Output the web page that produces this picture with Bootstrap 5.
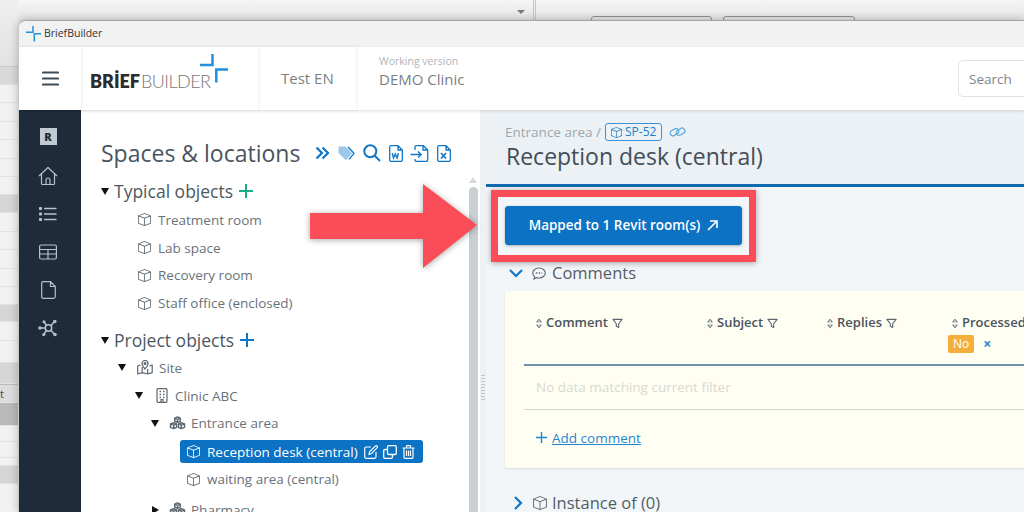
<!DOCTYPE html>
<html lang="en">
<head>
<meta charset="utf-8">
<title>BriefBuilder</title>
<link href="https://cdn.jsdelivr.net/npm/bootstrap@5.3.0/dist/css/bootstrap.min.css" rel="stylesheet">
<style>
html,body{margin:0;height:512px;overflow:hidden;}
body{font-family:"Open Sans","Noto Sans",sans-serif;color:#4d5761;background:#f1f1f1;}
.bb-stage{position:relative;width:1024px;height:512px;overflow:hidden;background:linear-gradient(#f6f6f6,#e4e4e4 20px,#e4e4e4);}
.bb-back{position:absolute;left:0;top:0;width:19px;height:512px;display:flex;flex-direction:column;background:#f1f1f1;}
.bb-back div{flex:none;height:18.4px;border-bottom:1px solid #e2e2e2;}
.bb-back .b0{height:66px;background:linear-gradient(#efefef,#e2e2e2);border:0;}
.bb-back .b1{height:19px;background:#d9d9d9;border-top:1px solid #ccc;}
.bb-back .b3{height:18px;background:#d5d5d5;}
.bb-back .b3s{height:17px;background:#d5d5d5;}
.bb-back .b6{height:21px;background:#d6d6d6;}
.bb-back .b7{height:22px;}
.bb-back .b8{height:16px;}
.bb-back .b9{height:8px;}
.bb-back .b4{height:19px;background:#dcdcdc;border-top:1px solid #bbb;font-size:11px;line-height:18px;color:#444;}
.bb-back .b5{height:23px;background:#b9b9b9;}
.bb-vline{position:absolute;left:533px;top:0;width:3px;height:20px;border:solid #c4c4c4;border-width:0 1px;}
.bb-tri{position:absolute;left:517px;top:10px;border:4px solid transparent;border-top:4px solid #777;border-bottom:0;}
.bb-ghost{position:absolute;top:16px;height:6px;border:1px solid #8f8f8f;border-radius:3px 3px 0 0;}
.bb-g1{left:591px;width:121px;}
.bb-g2{left:723px;width:132px;}
.bb-win{position:relative;margin:20px 0 0 18px;height:492px;border-top:1px solid #a6a6a6;border-left:1px solid #c9c9c9;border-top-left-radius:8px;overflow:hidden;box-shadow:0 0 8px rgba(0,0,0,.25);background:#fff;}
.bb-title{height:26px;background:#f2f2f2;font-size:10.5px;color:#333;padding-left:7px;gap:3px;}
.bb-head{height:63px;background:#fff;box-shadow:0 1px 3px rgba(0,0,0,.14);position:relative;z-index:2;}
.bb-cell{height:63px;box-shadow:1px 0 3px rgba(0,0,0,.07);flex:none;}
.bb-c1{width:62px;color:#3d4a57;}
.bb-c2{width:177px;padding-left:9px;position:relative;}
.bb-c3{width:98px;font-size:15px;color:#7a7f84;padding-left:23px;}
.bb-c4{padding:7px 0 0 23px;font-size:15px;color:#7a7f84;line-height:20px;box-shadow:none;flex:1 1 auto;}
.bb-ver{font-size:10.5px;color:#b0b4b8;line-height:15px;}
.bb-logo{font-family:"Lato","Open Sans",sans-serif;font-size:18px;line-height:1;color:#777;font-weight:300;margin-top:4px;white-space:nowrap;letter-spacing:-.55px;}
.bb-logo b{font-weight:800;color:#2c2c2c;margin-right:1px;letter-spacing:0;}
.bb-cross{position:absolute;left:119px;top:7px;}
.bb-search{width:90px;height:37px;border-radius:5px 0 0 5px;font-size:13.5px;padding-left:10px;border-color:#dfe3e6;margin-right:-24px;flex:none;}
.bb-search::placeholder{color:#7d8389;opacity:1;}
.bb-body{height:402px;}
.bb-side{width:62px;flex:none;background:#1d2b3a;color:#b6c1cb;padding:21px 4px 0 0;}
.bb-sico{height:38.2px;flex:none;}
.bb-r{width:17px;height:17px;background:#c3cbd2;color:#1d2b3a;font-size:11px;font-weight:800;line-height:17px;text-align:center;margin-top:-3px;margin-bottom:17px;}
.bb-tree{width:399px;flex:none;background:#fff;padding:28px 0 0 20px;position:relative;overflow:hidden;}
.bb-h1{font-size:23px;line-height:30px;color:#4a545e;white-space:nowrap;margin:0;font-weight:400;}
.bb-tools{margin-left:15px;gap:7.500px;color:#0e76c6;}
.bb-h2{font-size:17.500px;line-height:28px;color:#4d5761;margin:9px 0 0;}
.bb-h2 .bb-car{margin-right:5px;}
.bb-h2b{margin-top:9px;}
.bb-plus{margin-left:6px;}
.bb-row{height:27.75px;font-size:13.5px;color:#69727a;white-space:nowrap;}
.bb-ul{list-style:none;margin:0;padding:0;}
.bb-ul1{margin-top:1px;padding-left:37px;}
.bb-car{width:0;height:0;border:4px solid transparent;border-top:7px solid #111;border-bottom:0;display:inline-block;margin-right:6px;flex:none;}
.bb-car.bb-r2{border:4px solid transparent;border-left:7px solid #111;border-right:0;margin-right:5px;margin-left:1px;}
.bb-t1{padding-left:17px;}
.bb-t1 .bb-car{margin-right:11px;}
.bb-t1 .bb-ic{margin-right:6px;}
.bb-t2{padding-left:34px;}
.bb-t2 .bb-car{margin-right:13px;}
.bb-t2 .bb-ic{margin-right:7px;}
.bb-t3{padding-left:50px;}
.bb-t3 .bb-car{margin-right:10px;}
.bb-t3 .bb-ic{margin-right:5px;}
.bb-t4{padding-left:79px;}
.bb-t5{padding-left:86px;}
.bb-pharm{margin-top:3px;}
.bb-ic{margin-right:7px;flex:none;color:#5c666f;}
.bb-sel{background:#0b72c4;color:#fff;height:23px;border-radius:3px;width:243px;padding-left:7px;margin:3px 0 2px;}
.bb-sel .bb-ic{color:#fff;}
.bb-acts{gap:5px;margin-left:6px;}
.bb-bar{position:absolute;right:2px;top:77px;width:9px;height:400px;background:#c8d0d3;border-radius:5px 5px 0 0;}
.bb-bar-up{position:absolute;right:3px;top:67px;border:4px solid transparent;border-bottom:6px solid #d3d9dc;border-top:0;}
.bb-gut{width:6px;flex:none;background:#eef1f3;position:relative;}
.bb-dots{position:absolute;left:1px;top:265px;width:4px;height:26px;background:repeating-linear-gradient(#bfc5c9 0 1px,transparent 1px 3px);}
.bb-main{background:#f3f6f9;overflow:hidden;min-width:0;}
.bb-top{height:74px;background:#ebf1f5;padding:12px 0 0 19px;}
.bb-line{height:3px;background:#0f6cae;}
.bb-crumb{font-size:13.5px;line-height:20px;color:#a0a8ae;}
.bb-tag{border:1px solid #3a94d6;border-radius:3px;color:#1e7fc7;font-size:12px;padding:0 5px;height:18px;margin-left:4px;gap:3px;line-height:16px;}
.bb-chain{margin-left:7px;color:#5aa6dc;}
.bb-title2{font-size:23px;line-height:28px;color:#434d56;margin:0 0 0 1px;font-weight:400;white-space:nowrap;}
.bb-hl{width:265px;height:72px;margin:3px 0 0 5px;border:7px solid #fb4d57;box-shadow:0 1px 6px rgba(0,0,0,.35);padding:9px 7px 0;}
.bb-go{width:237px;height:39px;background:#0b72c4;border-color:#0b72c4;color:#fff;font-size:13.5px;font-weight:600;border-radius:3px;gap:7px;padding:0;box-shadow:0 1px 3px rgba(0,0,0,.3);}
.bb-sec{font-size:16.500px;color:#525c66;line-height:22px;padding-left:23px;}
.bb-chev{color:#0e76c6;margin-right:9px;flex:none;}
.bb-sec .bb-ic{margin-right:6px;}
.bb-card{background:#fffef3;height:177px;margin:7px 0 0 19px;padding:0 0 0 19px;box-shadow:0 1px 2px rgba(0,0,0,.12);border-radius:3px 0 0 3px;overflow:hidden;}
.bb-tb{width:560px;table-layout:fixed;margin:0;--bs-table-bg:transparent;}
.bb-tb th{height:74px;vertical-align:top;padding:22px 0 0 11px;font-size:13px;font-weight:600;color:#4a545e;border-bottom:2px solid #6d93ad;white-space:nowrap;position:relative;}
.bb-c-a{width:171px;}
.bb-c-b{width:120px;}
.bb-c-c{width:125px;}
.bb-tb td{height:44px;vertical-align:middle;font-size:13.5px;color:#d9d9d2;padding:0 0 0 12px;border-bottom:1px solid #d5d5d0;white-space:nowrap;}
.bb-sort{display:inline-block;margin-right:3px;color:#5c666f;}
.bb-fil{margin-left:4px;color:#5c666f;}
.bb-no{background:#f5ad3c;color:#fff;font-size:12px;font-weight:400;line-height:18px;height:18px;border-radius:2px;padding:0 5px;}
.bb-noline{margin:2px 0 0 -3px;line-height:18px;}
.bb-x{color:#1f85d0;font-size:14px;margin-left:9px;font-weight:700;}
.bb-add{padding:18px 0 0 12px;font-size:13.5px;line-height:20px;color:#1f85d0;}
.bb-add a{color:#1f85d0;margin-left:5px;}
.bb-s2{margin-top:24px;padding-left:28px;}
.bb-s2 .bb-chev{margin-right:10px;}
.bb-s2 .bb-ic{margin-right:5px;}
.bb-arrow{position:absolute;left:308px;top:182px;z-index:5;filter:drop-shadow(0 1px 3px rgba(0,0,0,.35));}
</style>
</head>
<body>
<svg width="0" height="0" class="d-none">
<defs>
<symbol id="box" viewBox="0 0 16 16"><path fill="currentColor" d="M8.186 1.113a.5.5 0 0 0-.372 0L1.846 3.5 8 5.961 14.154 3.5 8.186 1.113zM15 4.239l-6.5 2.6v7.922l6.5-2.6V4.24zM7.5 14.762V6.838L1 4.239v7.925l6.5 2.6zM7.443.184a1.5 1.5 0 0 1 1.114 0l7.129 2.852A.5.5 0 0 1 16 3.5v8.662a1 1 0 0 1-.629.928l-7.185 2.874a.5.5 0 0 1-.372 0L.63 13.09a1 1 0 0 1-.63-.928V3.5a.5.5 0 0 1 .314-.464L7.443.184z"/></symbol>
<symbol id="boxes" viewBox="0 0 18 16"><g fill="none" stroke="currentColor" stroke-width="1.500" stroke-linejoin="round"><path d="M9 1l3 1.300v3.200L9 6.800 6 5.500V2.300zM6 2.300l3 1.300 3-1.300M9 3.600v3.200"/><path d="M5 7.200l3 1.300v3.700l-3 1.300-3.500-1.300V8.500zM1.500 8.500l3.500 1.300 3-1.300M5 9.800v3.700"/><path d="M13 7.200l3.500 1.300v3.700L13 13.500l-3-1.300V8.500zM10 8.500l3 1.300 3.500-1.300M13 9.800v3.700"/></g></symbol>
<symbol id="filter" viewBox="0 0 12 12"><path fill="none" stroke="currentColor" stroke-width="1.200" stroke-linejoin="round" d="M1 1.500h10L7.300 6.300v4L4.700 9V6.300z"/></symbol>
<symbol id="sort" viewBox="0 0 8 12"><path fill="currentColor" d="M4 .8 7.300 4.700H.7zM4 11.200.7 7.300h6.600z"/><path fill="#fffef3" d="M4 2.300 5.600 4H2.400zM4 9.700 2.400 8h3.200z"/></symbol>
</defs>
</svg>
<div class="bb-stage">
  <div class="bb-back"><div class="b0"></div><div class="b1"></div><div></div><div></div><div></div><div></div><div></div><div></div><div class="b3"></div><div></div><div></div><div></div><div></div><div></div><div class="b3s"></div><div></div><div class="b7"></div><div class="b6"></div><div class="b4">t</div><div class="b5"></div><div class="b8"></div><div class="b8"></div><div class="b9"></div><div class="b3"></div></div>
  <div class="bb-vline"></div><div class="bb-tri"></div><div class="bb-ghost bb-g1"></div><div class="bb-ghost bb-g2"></div>

  <div class="bb-win">
    <div class="bb-title d-flex align-items-center">
      <svg width="15" height="16" viewBox="0 0 15 16"><path fill="none" stroke="#2291dc" stroke-width="1.500" d="M0 6.300h7V0M15 7.700H8.300V15.500"/></svg>
      <span>BriefBuilder</span>
    </div>
    <div class="bb-head d-flex align-items-center">
      <div class="bb-cell bb-c1 d-flex align-items-center justify-content-center">
        <svg width="17" height="15" viewBox="0 0 17 15"><path stroke="currentColor" stroke-width="2.200" stroke-linecap="round" d="M1 1.500h15M1 7.500h15M1 13.500h15"/></svg>
      </div>
      <div class="bb-cell bb-c2 d-flex align-items-center">
        <span class="bb-logo"><b>BRİEF</b>BUILDER</span>
        <svg class="bb-cross" width="28" height="29" viewBox="0 0 28 29"><path fill="none" stroke="#1e90dc" stroke-width="2.500" d="M0 11h12.500V0M28 15.500H16.300V28.500"/></svg>
      </div>
      <div class="bb-cell bb-c3 d-flex align-items-center">Test EN</div>
      <div class="bb-cell bb-c4 d-flex flex-column"><span class="bb-ver">Working version</span><span>DEMO Clinic</span></div>
      <input class="form-control bb-search" type="text" placeholder="Search">
    </div>
    <div class="bb-body d-flex">
      <div class="bb-side d-flex flex-column align-items-center">
        <div class="bb-r">R</div>
        <div class="bb-sico"><svg width="20" height="20" viewBox="0 0 20 20" fill="none" stroke="currentColor" stroke-width="1.200" stroke-linejoin="round"><path d="M1 10 10 1.500 19 10M3.500 8v9.500a1 1 0 0 0 1 1h11a1 1 0 0 0 1-1V8M8 18.500V14a2 2 0 0 1 4 0v4.500"/></svg></div>
        <div class="bb-sico"><svg width="18" height="14" viewBox="0 0 18 14" fill="currentColor"><rect x="0" y="0" width="3" height="3" rx=".8"/><rect x="0" y="5.500" width="3" height="3" rx=".8"/><rect x="0" y="11" width="3" height="3" rx=".8"/><path stroke="currentColor" stroke-width="1.400" d="M5 1.500h12.500M5 7h12.500M5 12.500h12.500"/></svg></div>
        <div class="bb-sico"><svg width="18" height="16" viewBox="0 0 18 16" fill="none" stroke="currentColor" stroke-width="1.200"><rect x=".6" y="1" width="16.800" height="14" rx="1.500"/><path d="M.6 5.500h16.800M.6 10h16.800M9 5.500V15"/></svg></div>
        <div class="bb-sico"><svg width="15" height="18" viewBox="0 0 15 18" fill="none" stroke="currentColor" stroke-width="1.200" stroke-linejoin="round"><path d="M2 .7h7.500l4.800 4.800V15.500a1.800 1.800 0 0 1-1.800 1.800H2A1.400 1.400 0 0 1 .7 15.500V2A1.400 1.400 0 0 1 2 .7zM9.500.7v4.800h4.800"/></svg></div>
        <div class="bb-sico"><svg width="21" height="18" viewBox="0 0 21 18" fill="none" stroke="currentColor" stroke-width="1.500"><circle cx="10.500" cy="9" r="3.200"/><path d="M3 9h4.300M13 6.700 16 3M8.500 6.500 6.500 3.500M13 11.300l3 3.500M8.300 11.500 6.300 14.800"/><g fill="currentColor" stroke="none"><circle cx="2" cy="9" r="1.800"/><circle cx="16.800" cy="2.500" r="1.800"/><circle cx="6" cy="2.800" r="1.500"/><circle cx="17" cy="15.500" r="1.800"/><circle cx="5.800" cy="15.500" r="1.600"/></g></svg></div>
      </div>

      <div class="bb-tree">
        <div class="d-flex align-items-center">
          <h1 class="bb-h1">Spaces &amp; locations</h1>
          <div class="bb-tools d-flex align-items-center">
            <svg width="15" height="14" viewBox="0 0 15 14" fill="none" stroke="currentColor" stroke-width="2.200"><path d="M1.500 1.500 7 7l-5.500 5.500M7.500 1.500 13 7l-5.500 5.500"/></svg>
            <svg width="18" height="15" viewBox="0 0 18 15"><path fill="#9cc8ec" d="M.5 1.500A1 1 0 0 1 1.500.5h6l6 6a1 1 0 0 1 0 1.400l-5 5.500a1 1 0 0 1-1.400 0l-6.600-6.500z"/><path fill="none" stroke="#0e76c6" stroke-width="1.300" d="M10 1l6 6.300-5 6"/></svg>
            <svg width="18" height="18" viewBox="0 0 18 18" fill="none" stroke="currentColor" stroke-width="2"><circle cx="7.300" cy="7.300" r="6"/><path d="m11.800 11.800 5.200 5.200"/></svg>
            <svg width="14" height="17" viewBox="0 0 14 17" fill="none" stroke="currentColor" stroke-width="1.300"><path d="M2 .7h7l4.300 4.300v10a1.400 1.400 0 0 1-1.400 1.400H2A1.400 1.400 0 0 1 .7 15V2A1.400 1.400 0 0 1 2 .7zM9 .7V5h4.300"/><path stroke-width="1.400" d="M3.200 8l1.300 5 1.800-4 1.700 4 1.500-5"/></svg>
            <svg width="19" height="17" viewBox="0 0 19 17" fill="none" stroke="currentColor" stroke-width="1.300"><path d="M5 5V2A1.400 1.400 0 0 1 6.400.7h7l4.300 4.300v10a1.400 1.400 0 0 1-1.400 1.400H6.400A1.400 1.400 0 0 1 5 15v-1M13 .7V5h4.700M.5 9.500h10M8 6.500l3.200 3-3.200 3"/></svg>
            <svg width="14" height="17" viewBox="0 0 14 17" fill="none" stroke="currentColor" stroke-width="1.300"><path d="M2 .7h7l4.300 4.300v10a1.400 1.400 0 0 1-1.400 1.400H2A1.400 1.400 0 0 1 .7 15V2A1.400 1.400 0 0 1 2 .7zM9 .7V5h4.300"/><path stroke-width="1.700" d="m4 8 5 5.500M9 8l-5 5.500"/></svg>
          </div>
        </div>
        <div class="bb-h2 d-flex align-items-center"><span class="bb-car"></span>Typical objects<svg class="bb-plus" width="14" height="14" viewBox="0 0 14 14"><path stroke="#16b18a" stroke-width="2" d="M0 7h14M7 0v14"/></svg></div>
        <ul class="bb-ul bb-ul1">
          <li class="bb-row d-flex align-items-center"><svg class="bb-ic" width="13" height="13"><use href="#box"/></svg>Treatment room</li>
          <li class="bb-row d-flex align-items-center"><svg class="bb-ic" width="13" height="13"><use href="#box"/></svg>Lab space</li>
          <li class="bb-row d-flex align-items-center"><svg class="bb-ic" width="13" height="13"><use href="#box"/></svg>Recovery room</li>
          <li class="bb-row d-flex align-items-center"><svg class="bb-ic" width="13" height="13"><use href="#box"/></svg>Staff office (enclosed)</li>
        </ul>
        <div class="bb-h2 bb-h2b d-flex align-items-center"><span class="bb-car"></span>Project objects<svg class="bb-plus" width="14" height="14" viewBox="0 0 14 14"><path stroke="#0e76c6" stroke-width="2" d="M0 7h14M7 0v14"/></svg></div>
        <ul class="bb-ul">
          <li class="bb-row bb-t1 d-flex align-items-center"><span class="bb-car"></span><svg class="bb-ic" width="16" height="15" viewBox="0 0 16 15" fill="none" stroke="#5c666f" stroke-width="1.200" stroke-linejoin="round"><path d="M3.500 5 .7 6v8l4.500-1.300 5.500 1.300 4.500-1.300V5l-2.800 1M5.200 7v5.700M10.700 9v5"/><path d="M8 9S5 5.700 5 3.500a3 3 0 0 1 6 0C11 5.700 8 9 8 9z"/><circle cx="8" cy="3.500" r=".9" fill="#5c666f"/></svg><span>Site</span></li>
          <li class="bb-row bb-t2 d-flex align-items-center"><span class="bb-car"></span><svg class="bb-ic" width="12" height="15" viewBox="0 0 12 15" fill="none" stroke="#5c666f" stroke-width="1.200"><rect x="1" y=".7" width="10" height="13.600" rx="1"/><path stroke-width="1.500" d="M3.500 3.500h1.500M7 3.500h1.500M3.500 6.500h1.500M7 6.500h1.500M3.500 9.500h1.500M7 9.500h1.500"/><path d="M5 14v-2.500h2V14"/></svg><span>Clinic ABC</span></li>
          <li class="bb-row bb-t3 d-flex align-items-center"><span class="bb-car"></span><svg class="bb-ic" width="17" height="15"><use href="#boxes"/></svg><span>Entrance area</span></li>
          <li class="bb-t4"><div class="bb-row bb-sel d-flex align-items-center"><svg class="bb-ic" width="13" height="13"><use href="#box"/></svg>Reception desk (central)
            <span class="bb-acts d-flex align-items-center">
              <svg width="14" height="14" viewBox="0 0 14 14" fill="none" stroke="#fff" stroke-width="1.200"><path d="M7 2H2.200A1.500 1.500 0 0 0 .7 3.500v8.300a1.500 1.500 0 0 0 1.500 1.500h8.300a1.500 1.500 0 0 0 1.500-1.500V7M5 9.300l.7-2.800L11.500.9a1 1 0 0 1 1.500 0l.2.200a1 1 0 0 1 0 1.500L7.600 8.500z"/></svg>
              <svg width="14" height="14" viewBox="0 0 14 14" fill="none" stroke="#fff" stroke-width="1.300"><rect x="4.500" y=".7" width="8.800" height="8.800" rx="1.300"/><path d="M4.500 4.500H2A1.300 1.300 0 0 0 .7 5.800V12A1.300 1.300 0 0 0 2 13.300h6.200A1.300 1.300 0 0 0 9.500 12V9.500"/></svg>
              <svg width="13" height="14" viewBox="0 0 13 14" fill="none" stroke="#fff" stroke-width="1.200"><path d="M.5 3h12M4.500 3V1.300a.6.600 0 0 1 .6-.6h2.800a.6.600 0 0 1 .6.600V3M2 3v9.300a1 1 0 0 0 1 1h7a1 1 0 0 0 1-1V3M4.500 5.500v5.500M6.500 5.500v5.500M8.500 5.500v5.500"/></svg>
            </span></div></li>
          <li class="bb-row bb-t5 d-flex align-items-center"><svg class="bb-ic" width="13" height="13"><use href="#box"/></svg>waiting area (central)</li>
          <li class="bb-row bb-t3 bb-pharm d-flex align-items-center"><span class="bb-car bb-r2"></span><svg class="bb-ic" width="17" height="15"><use href="#boxes"/></svg>Pharmacy</li>
        </ul>
        <div class="bb-bar-up"></div><div class="bb-bar"></div>
      </div>
      <div class="bb-gut"><div class="bb-dots"></div></div>

      <div class="bb-main flex-grow-1">
        <div class="bb-top">
          <div class="bb-crumb d-flex align-items-center">Entrance area /<span class="bb-tag d-inline-flex align-items-center"><svg width="11" height="11"><use href="#box"/></svg>SP-52</span>
            <svg class="bb-chain" width="17" height="12" viewBox="0 0 17 12" fill="none" stroke="currentColor" stroke-width="1.200"><rect x=".9" y="3.500" width="9" height="5.500" rx="2.700" transform="rotate(-30 5.400 6.200)"/><rect x="7" y="3" width="9" height="5.500" rx="2.700" transform="rotate(-30 11.500 5.700)"/></svg>
          </div>
          <h2 class="bb-title2">Reception desk (central)</h2>
        </div>
        <div class="bb-line"></div>
        <div class="bb-hl">
          <button type="button" class="btn btn-primary bb-go d-flex align-items-center justify-content-center">Mapped to 1 Revit room(s)
            <svg width="11" height="11" viewBox="0 0 11 11" fill="none" stroke="#fff" stroke-width="1.600"><path d="M1 10 10 1M3 1h7v7"/></svg>
          </button>
        </div>
        <div class="bb-sec d-flex align-items-center">
          <svg class="bb-chev" width="14" height="9" viewBox="0 0 14 9" fill="none" stroke="currentColor" stroke-width="2.200"><path d="M1 1l6 6 6-6"/></svg>
          <svg class="bb-ic" width="14" height="13" viewBox="0 0 14 13" fill="none" stroke="#5c666f" stroke-width="1.100"><path d="M7 1c3.500 0 6.300 2.200 6.300 5S10.500 11 7 11c-.8 0-1.500-.1-2.200-.3L2 12l.6-2.500C1.300 8.600.7 7.400.7 6 .7 3.200 3.500 1 7 1z"/><path stroke-width="1.400" stroke-dasharray="1.400 1.500" d="M3.800 6h6.500"/></svg>
          <span>Comments</span>
        </div>
        <div class="bb-card">
          <table class="table bb-tb">
            <colgroup><col class="bb-c-a"><col class="bb-c-b"><col class="bb-c-c"><col></colgroup>
            <thead><tr>
              <th><svg class="bb-sort" width="8" height="11"><use href="#sort"/></svg>Comment<svg class="bb-fil" width="11" height="11"><use href="#filter"/></svg></th>
              <th><svg class="bb-sort" width="8" height="11"><use href="#sort"/></svg>Subject<svg class="bb-fil" width="11" height="11"><use href="#filter"/></svg></th>
              <th><svg class="bb-sort" width="8" height="11"><use href="#sort"/></svg>Replies<svg class="bb-fil" width="11" height="11"><use href="#filter"/></svg></th>
              <th><svg class="bb-sort" width="8" height="11"><use href="#sort"/></svg>Processed<div class="bb-noline d-flex align-items-center"><span class="bb-no">No</span><span class="bb-x">×</span></div></th>
            </tr></thead>
            <tbody><tr><td colspan="4">No data matching current filter</td></tr></tbody>
          </table>
          <div class="bb-add d-flex align-items-center">
            <svg width="11" height="11" viewBox="0 0 11 11"><path stroke="currentColor" stroke-width="1.400" d="M0 5.500h11M5.500 0v11"/></svg>
            <a href="#">Add comment</a>
          </div>
        </div>
        <div class="bb-sec bb-s2 d-flex align-items-center">
          <svg class="bb-chev" width="9" height="14" viewBox="0 0 9 14" fill="none" stroke="currentColor" stroke-width="2.200"><path d="M1 1l6 6-6 6"/></svg>
          <svg class="bb-ic" width="14" height="14"><use href="#box"/></svg>
          <span>Instance of (0)</span>
        </div>
      </div>
    </div>
  </div>

  <svg class="bb-arrow" width="172" height="88" viewBox="0 0 172 88"><path fill="#fb4d57" d="M2 31h113V2l54 41-54 43V57H2z"/></svg>
</div>
<script src="https://cdn.jsdelivr.net/npm/bootstrap@5.3.0/dist/js/bootstrap.bundle.min.js"></script>
</body>
</html>
